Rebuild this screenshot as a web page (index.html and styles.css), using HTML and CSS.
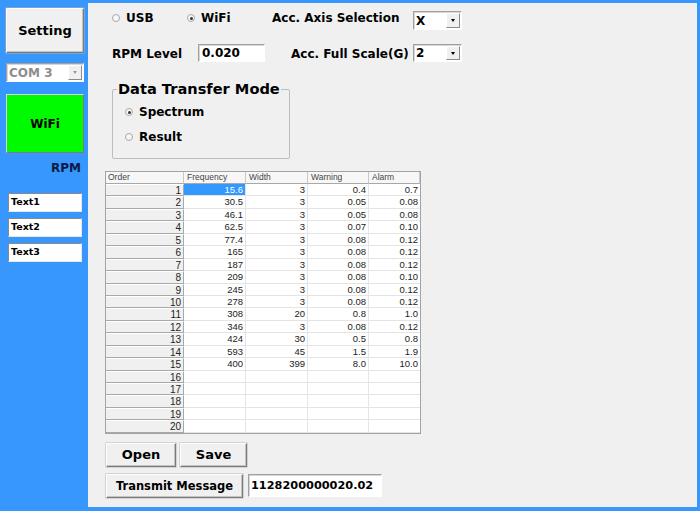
FILE: index.html
```html
<!DOCTYPE html>
<html>
<head>
<meta charset="utf-8">
<link rel="stylesheet" href="styles.css">
</head>
<body>
<div class="window">
  <aside class="sidebar">
    <div class="btn setting">Setting</div>
    <div class="combo com"><span class="combo-text">COM 3</span><span class="drop"><i></i></span></div>
    <div class="wifi">WiFi</div>
    <div class="rpm">RPM</div>
    <div class="field">Text1</div>
    <div class="field">Text2</div>
    <div class="field">Text3</div>
  </aside>
  <main class="main">
    <div class="row row1">
      <label class="radio-label usb"><span class="radio"></span>USB</label>
      <label class="radio-label wifi-opt"><span class="radio checked"></span>WiFi</label>
      <span class="lbl axis">Acc. Axis Selection</span>
      <div class="combo sel"><span class="combo-text">X</span><span class="drop"><i></i></span></div>
    </div>
    <div class="row row2">
      <span class="lbl rpmlvl">RPM Level</span>
      <div class="input rpminput">0.020</div>
      <span class="lbl scale">Acc. Full Scale(G)</span>
      <div class="combo sel"><span class="combo-text">2</span><span class="drop"><i></i></span></div>
    </div>
    <fieldset class="group">
      <legend>Data Transfer Mode</legend>
      <label class="radio-label opt"><span class="radio checked"></span>Spectrum</label>
      <label class="radio-label opt"><span class="radio"></span>Result</label>
    </fieldset>
    <div class="grid" id="grid">
      <div class="hc">Order</div><div class="hc">Frequency</div><div class="hc">Width</div><div class="hc">Warning</div><div class="hc">Alarm</div>
    </div>
    <div class="btnrow">
      <div class="btn open">Open</div>
      <div class="btn save">Save</div>
    </div>
    <div class="btnrow row-tx">
      <div class="btn tx">Transmit Message</div>
      <div class="input txinput"><span class="txtext">1128200000020.02</span></div>
    </div>
  </main>
</div>
<script src="script.js"></script>
</body>
</html>
```
FILE: script.js
```js
var data = [
  ["15.6","3","0.4","0.7"],
  ["30.5","3","0.05","0.08"],
  ["46.1","3","0.05","0.08"],
  ["62.5","3","0.07","0.10"],
  ["77.4","3","0.08","0.12"],
  ["165","3","0.08","0.12"],
  ["187","3","0.08","0.12"],
  ["209","3","0.08","0.10"],
  ["245","3","0.08","0.12"],
  ["278","3","0.08","0.12"],
  ["308","20","0.8","1.0"],
  ["346","3","0.08","0.12"],
  ["424","30","0.5","0.8"],
  ["593","45","1.5","1.9"],
  ["400","399","8.0","10.0"]
];
var grid = document.getElementById("grid");
for (var i = 0; i < 20; i++) {
  var rh = document.createElement("div");
  rh.className = "rc";
  rh.textContent = String(i + 1);
  grid.appendChild(rh);
  for (var j = 0; j < 4; j++) {
    var c = document.createElement("div");
    c.className = "dc" + (j === 3 ? " last" : "") + (i === 0 && j === 0 ? " sel-cell" : "");
    c.textContent = data[i] ? data[i][j] : "";
    grid.appendChild(c);
  }
}
```
FILE: styles.css
```css
html, body {
  margin: 0;
  padding: 0;
}
body {
  width: 700px;
  height: 511px;
  overflow: hidden;
  font-family: "DejaVu Sans", Verdana, sans-serif;
  font-weight: bold;
  font-size: 12px;
  color: #000;
}
.window {
  box-sizing: border-box;
  width: 700px;
  height: 511px;
  background: #3797fd;
  padding: 3px 3px 4px 0;
  display: flex;
}
.sidebar {
  width: 88px;
  flex: none;
  box-sizing: border-box;
  padding: 5px 0 0 6px;
  display: flex;
  flex-direction: column;
}
.main {
  flex: 1;
  background: #f0f0f0;
  box-sizing: border-box;
  padding: 8px 0 0 17px;
  display: flex;
  flex-direction: column;
  align-items: flex-start;
}
.btn {
  box-sizing: border-box;
  background: #f0f0f0;
  border: 1px solid;
  border-color: #ffffff #7a7a7a #7a7a7a #ffffff;
  box-shadow: inset -1px -1px 0 #c4c4c4, 0 0 0 0.5px #b5b5b5;
  display: flex;
  align-items: center;
  justify-content: center;
}
.setting {
  width: 78px;
  height: 45px;
  font-size: 13px;
}
.combo {
  box-sizing: border-box;
  background: #fff;
  border: 1px solid;
  border-color: #a0a0a0 #ffffff #ffffff #a0a0a0;
  box-shadow: inset 1px 1px 0 #d6d6d6;
  display: flex;
  align-items: center;
  position: relative;
}
.combo-text {
  flex: 1;
  padding-left: 2px;
}
.drop {
  width: 14px;
  align-self: stretch;
  margin: 1px 1px 1px 0;
  background: #f0f0f0;
  border: 1px solid;
  border-color: #fff #8a8a8a #8a8a8a #fff;
  box-sizing: border-box;
  display: flex;
  align-items: center;
  justify-content: center;
}
.drop i {
  width: 0;
  height: 0;
  border-left: 2.5px solid transparent;
  border-right: 2.5px solid transparent;
  border-top: 3px solid #000;
}
.com {
  width: 78px;
  height: 19px;
  margin-top: 10px;
  color: #8d8d8d;
  font-size: 12px;
}
.com .drop i {
  border-top-color: #999;
}
.wifi {
  box-sizing: border-box;
  width: 78px;
  height: 59px;
  margin-top: 12px;
  background: #00fa00;
  border: 1px solid;
  border-color: #d8d8d8 #7d7d7d #7d7d7d #d8d8d8;
  display: flex;
  align-items: center;
  justify-content: center;
  font-size: 12px;
}
.rpm {
  margin-top: 8px;
  width: 75px;
  text-align: right;
  line-height: 14px;
  color: #0c1a45;
}
.field {
  box-sizing: border-box;
  width: 74px;
  height: 19px;
  margin-left: 2px;
  background: #fff;
  border: 1px solid;
  border-color: #8a8a8a #e8e8e8 #e8e8e8 #8a8a8a;
  font-size: 9.5px;
  padding-left: 2px;
  line-height: 16px;
}
.rpm + .field {
  margin-top: 18px;
}
.field + .field {
  margin-top: 6px;
}
.row {
  display: flex;
  align-items: center;
}
.row1 {
  height: 20px;
  margin-left: 7px;
  align-items: flex-start;
}
.row1 .radio-label,
.row1 .lbl {
  line-height: 14px;
  height: 14px;
}
.radio-label {
  display: flex;
  align-items: center;
}
.radio {
  box-sizing: border-box;
  width: 8px;
  height: 8px;
  border-radius: 50%;
  border: 1px solid #a8a8a8;
  background: #f8f8f8;
  margin-right: 6px;
  position: relative;
  flex: none;
}
.radio.checked::after {
  content: "";
  position: absolute;
  left: 1.5px;
  top: 1.5px;
  width: 3px;
  height: 3px;
  border-radius: 50%;
  background: #333;
}
.usb {
  width: 75px;
}
.wifi-opt {
  width: 85px;
}
.axis {
  width: 141px;
}
.sel {
  width: 49px;
  height: 19px;
}
.row2 {
  height: 18px;
  margin-top: 13px;
  margin-left: 7px;
}
.row2 .lbl {
  padding-top: 2px;
}
.row2 .sel {
  height: 18px;
}
.rpmlvl {
  width: 86px;
}
.input {
  box-sizing: border-box;
  background: #fff;
  border: 1px solid;
  border-color: #a0a0a0 #ffffff #ffffff #a0a0a0;
  box-shadow: inset 1px 1px 0 #d6d6d6;
  display: flex;
  align-items: center;
  padding-left: 3px;
}
.rpminput {
  width: 67px;
  height: 18px;
}
.scale {
  width: 122px;
  margin-left: 26px;
}
.group {
  box-sizing: border-box;
  margin: 18px 0 0 7px;
  width: 178px;
  height: 79px;
  padding: 4px 0 0 12px;
  border: 1px solid #bdbdbd;
  border-radius: 2px;
  display: flex;
  flex-direction: column;
  align-items: flex-start;
}
.group legend {
  font-size: 14.6px;
  padding: 0 1px;
  margin-left: -8px;
  line-height: 18px;
}
.opt {
  height: 20px;
  font-size: 12px;
}
.opt + .opt {
  margin-top: 5px;
}
.grid {
  margin-top: 12px;
  display: grid;
  grid-template-columns: 78px 62px 62px 61px 51px;
  grid-template-rows: 12px repeat(20, 12.45px);
  border: 1px solid #a3a3a3;
  background: #fff;
  font-family: "Liberation Sans", Arial, sans-serif;
  font-weight: normal;
  font-size: 8.5px;
  color: #222;
}
.hc {
  box-sizing: border-box;
  background: #f7f7f7;
  border-right: 1px solid #c8c8c8;
  border-bottom: 1px solid #a8a8a8;
  padding-left: 3px;
  line-height: 11px;
  white-space: nowrap;
  overflow: hidden;
  color: #444;
}
.hc:first-child {
  padding-left: 2px;
}
.rc {
  box-sizing: border-box;
  background: #f0f0f0;
  border-top: 1px solid #fff;
  border-right: 1px solid #a8a8a8;
  border-bottom: 1px solid #a8a8a8;
  text-align: right;
  padding-right: 2px;
  font-size: 10px;
  line-height: 11px;
}
.dc {
  box-sizing: border-box;
  border-right: 1px solid #e4e4e4;
  border-bottom: 1px solid #e4e4e4;
  text-align: right;
  padding-right: 2px;
  font-size: 9.5px;
  line-height: 11.5px;
}
.dc.last {
  border-right: none;
}
.sel-cell {
  background: #3399ff;
  color: #fff;
}
.btnrow {
  display: flex;
  margin-top: 9px;
  margin-left: 1px;
}
.open {
  width: 70px;
  height: 24px;
  font-size: 13px;
}
.save {
  width: 67px;
  height: 24px;
  margin-left: 4px;
  font-size: 13px;
}
.row-tx {
  margin-top: 7px;
  align-items: flex-start;
}
.tx {
  width: 137px;
  height: 24px;
  font-size: 11.5px;
}
.txinput {
  width: 134px;
  height: 23px;
  margin-left: 5px;
  overflow: hidden;
  white-space: nowrap;
  padding-left: 2px;
  font-size: 11.3px;
}
```
